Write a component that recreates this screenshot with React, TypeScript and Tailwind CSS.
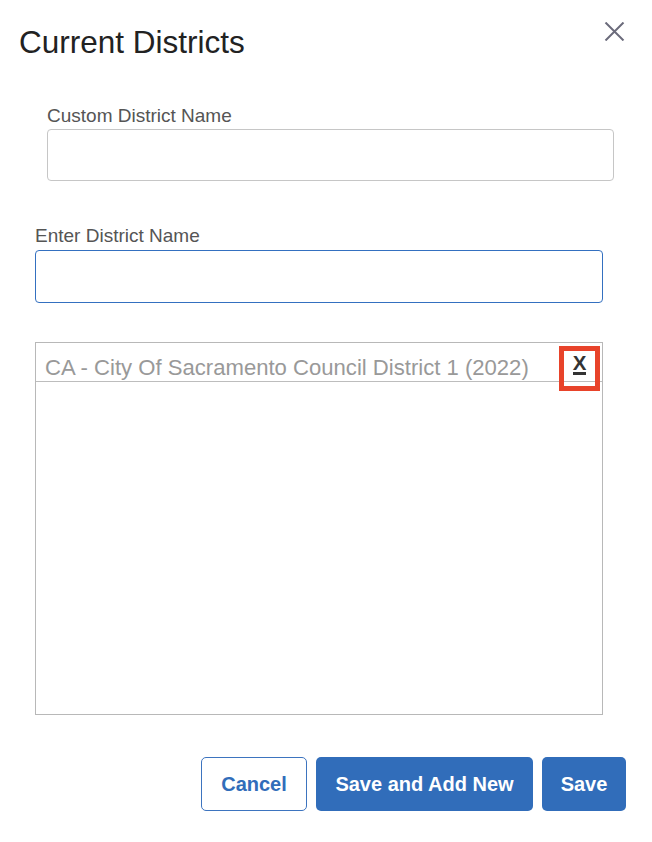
export default function App() {
	return (
		<div className="w-[652px] h-[842px] bg-white px-[19px] pt-[24px] font-['Liberation_Sans',Arial,Helvetica,sans-serif]">
			{/* Header */}
			<div className="flex items-start justify-between">
				<h2 className="text-[31.5px] leading-[36px] text-[#222]">Current Districts</h2>
				<button className="mr-[8px] -mt-[2px] p-0" aria-label="Close">
					<svg width="21" height="19" viewBox="0 0 21 19" className="block">
						<path d="M1.5 0.5 L19.5 18.5 M19.5 0.5 L1.5 18.5" stroke="#6b6b7b" strokeWidth="2" fill="none" />
					</svg>
				</button>
			</div>

			{/* Custom name */}
			<div className="mt-[45px] ml-[28px] mr-[19px]">
				<label className="block text-[19px] leading-[22px] text-[#555] mb-[2px]">Custom District Name</label>
				<input className="block w-full h-[52px] rounded-[4px] border border-[#c6c6c6] bg-white px-3 outline-none" />
			</div>

			{/* District search */}
			<div className="mt-[44px] ml-[16px] mr-[30px]">
				<label className="block text-[19px] leading-[22px] text-[#555] mb-[3px]">Enter District Name</label>
				<input className="block w-full h-[53px] rounded-[4px] border border-[#3470c0] bg-white px-3 outline-none" />

				{/* Selected list */}
				<div className="relative mt-[39px] h-[373px] border border-[#b8b8b8]">
					<div className="h-[39px] border-b border-[#bdbdbd] pl-[9px] pt-[12px]">
						<span className="block text-[22.1px] leading-[26px] text-[#999] whitespace-nowrap">
							CA - City Of Sacramento Council District 1 (2022)
						</span>
					</div>
					<div className="absolute top-[3px] right-[2px] w-[41px] h-[45px] border-[5px] border-[#e8432a] flex justify-center pt-[2px]">
						<span className="inline-block h-[22px] text-[20.5px] leading-[19px] font-bold text-[#333] border-b-[3px] border-[#333]">X</span>
					</div>
				</div>
			</div>

			{/* Actions */}
			<div className="mt-[42px] mr-[7px] flex justify-end gap-[9px]">
				<button className="w-[106px] h-[54px] rounded-[5px] border border-[#3d74bf] bg-white text-[20px] font-bold text-[#316dba]">Cancel</button>
				<button className="w-[217px] h-[54px] rounded-[5px] bg-[#316dba] text-[20px] font-bold text-white">Save and Add New</button>
				<button className="w-[84px] h-[54px] rounded-[5px] bg-[#316dba] text-[20px] font-bold text-white">Save</button>
			</div>
		</div>
	)
}
